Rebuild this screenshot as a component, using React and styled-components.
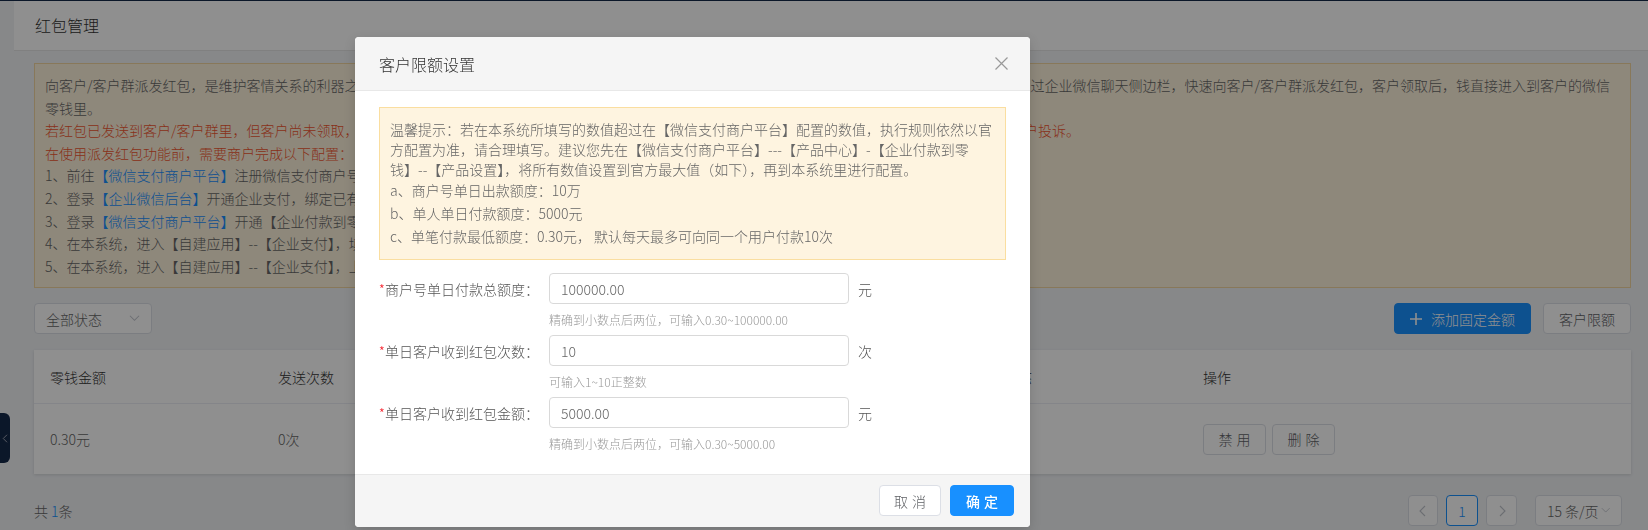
import React from 'react';
import styled, { createGlobalStyle } from 'styled-components';

const GlobalStyle = createGlobalStyle`
  html, body { margin: 0; padding: 0; }
  body {
    width: 1648px;
    height: 530px;
    overflow: hidden;
    background: #f0f2f5;
    font-family: "Noto Sans CJK SC", "Noto Sans", sans-serif;
    font-size: 14px;
    font-weight: 300;
    color: #666;
  }
  * { box-sizing: border-box; }
`;

const Page = styled.div`
  position: relative;
  width: 1648px;
  height: 530px;
`;

const TopLine = styled.div`
  height: 1px;
  background: #15294a;
`;

const Main = styled.div`
  margin-left: 14px;
`;

const PageHeader = styled.div`
  height: 50px;
  line-height: 49px;
  background: #fff;
  border-bottom: 1px solid #e4e4e4;
  padding-left: 21px;
  font-size: 16px;
  color: #333;
`;

const Content = styled.div`
  padding: 12px 17px 0 20px;
`;

const Notice = styled.div`
  border: 1px solid #f3d6a0;
  background: #fdf2dc;
  padding: 10px 12px 10px 10px;
  line-height: 22.6px;
  color: #666;
  white-space: nowrap;
`;

const Red = styled.div`
  color: #f2562f;
`;

const Link = styled.span`
  color: #1890ff;
`;

const Toolbar = styled.div`
  margin-top: 15px;
  height: 31px;
  display: flex;
  justify-content: space-between;
  align-items: center;
`;

const SelectBox = styled.div`
  width: ${(p) => p.w || 118}px;
  height: 31px;
  border: 1px solid #dcdfe6;
  border-radius: 4px;
  background: #fff;
  padding: 0 11px;
  display: flex;
  align-items: center;
  justify-content: space-between;
  white-space: nowrap;
  color: #666;
`;

const Actions = styled.div`
  display: flex;
  gap: 12px;
`;

const Button = styled.button`
  height: 31px;
  padding: 0 ${(p) => (p.w ? 0 : 15)}px;
  border-radius: 4px;
  font-family: inherit;
  font-size: 14px;
  white-space: nowrap;
  display: inline-flex;
  align-items: center;
  justify-content: center;
  gap: 9px;
  cursor: pointer;
  border: 1px solid ${(p) => (p.primary ? '#1890ff' : '#dcdfe6')};
  background: ${(p) => (p.primary ? '#1890ff' : '#fff')};
  color: ${(p) => (p.primary ? '#fff' : '#606266')};
  width: ${(p) => (p.w ? `${p.w}px` : 'auto')};
  letter-spacing: ${(p) => (p.spaced ? '0.3em' : 'normal')};
  text-indent: ${(p) => (p.spaced ? '0.3em' : '0')};
  font-weight: ${(p) => (p.bold ? 500 : 300)};
`;

const Table = styled.div`
  margin-top: 16px;
  background: #fff;
  box-shadow: 0 1px 3px rgba(0, 0, 0, 0.12);
`;

const Row = styled.div`
  display: grid;
  grid-template-columns: 228px 228px 228px 270px 199px 1fr;
  align-items: center;
  height: ${(p) => (p.head ? 54 : 70)}px;
  border-bottom: ${(p) => (p.head ? '1px solid #ebeef5' : 'none')};
  color: ${(p) => (p.head ? '#333' : '#666')};
`;

const Cell = styled.div`
  padding-left: 16px;
  display: flex;
  gap: 6px;
  white-space: nowrap;
`;

const Bottom = styled.div`
  margin-top: 21px;
  height: 31px;
  display: flex;
  align-items: center;
  justify-content: space-between;
  padding-right: 9px;
`;

const Total = styled.div`
  color: #666;
  span { color: #1890ff; }
`;

const Pager = styled.div`
  display: flex;
  align-items: center;
  gap: 8px;
`;

const PageBtn = styled.div`
  width: ${(p) => p.w || 31}px;
  height: 31px;
  border: 1px solid ${(p) => (p.active ? '#1890ff' : '#dcdfe6')};
  border-radius: 4px;
  background: #fff;
  color: ${(p) => (p.active ? '#1890ff' : '#c0c4cc')};
  display: flex;
  align-items: center;
  justify-content: center;
`;

const SizeSelect = styled(SelectBox)`
  margin-left: 10px;
  justify-content: flex-start;
  gap: 2px;
`;

const SideToggle = styled.div`
  position: absolute;
  left: 0;
  top: 413px;
  width: 10px;
  height: 50px;
  background: #15294a;
  border-radius: 0 6px 6px 0;
  display: flex;
  align-items: center;
  padding-left: 1px;
`;

const Mask = styled.div`
  position: fixed;
  inset: 0;
  background: rgba(0, 0, 0, 0.44);
`;

const Dialog = styled.div`
  position: absolute;
  left: 355px;
  top: 37px;
  width: 675px;
  background: #fff;
  border-radius: 4px;
  box-shadow: 0 4px 12px rgba(0, 0, 0, 0.15);
  overflow: hidden;
`;

const DialogHeader = styled.div`
  height: 54px;
  background: #f5f5f5;
  border-bottom: 1px solid #e8e8e8;
  padding: 0 22px 0 24px;
  display: flex;
  align-items: center;
  justify-content: space-between;
  font-size: 16px;
  color: #333;
`;

const DialogBody = styled.div`
  padding: 16px 24px 15px;
`;

const Tip = styled.div`
  border: 1px solid #fadea0;
  background: #fef4e0;
  padding: 11px 10px;
  color: #666;
  white-space: nowrap;
`;

const TipPara = styled.div`
  line-height: 20px;
`;

const TipLine = styled.div`
  line-height: 23px;
`;

const Form = styled.div`
  padding-top: 13px;
`;

const FormItem = styled.div`
  margin-bottom: 4px;
`;

const FormLine = styled.div`
  display: flex;
  align-items: center;
  height: 31px;
`;

const Label = styled.div`
  width: 170px;
  flex-shrink: 0;
  padding-right: 10px;
  display: flex;
  justify-content: flex-end;
  white-space: nowrap;
  color: #555;
  b {
    color: #f5222d;
    font-weight: 300;
  }
`;

const Input = styled.input`
  width: 300px;
  height: 31px;
  border: 1px solid #d9d9d9;
  border-radius: 4px;
  padding: 0 11px;
  font-family: inherit;
  font-size: 14px;
  font-weight: 300;
  color: #666;
  outline: none;
`;

const Unit = styled.span`
  margin-left: 9px;
  color: #555;
`;

const Help = styled.div`
  margin: 5px 0 0 170px;
  line-height: 22px;
  font-size: 12px;
  color: #999;
`;

const DialogFooter = styled.div`
  border-top: 1px solid #e8e8e8;
  background: #f5f5f5;
  padding: 10px 16px 11px;
  display: flex;
  justify-content: flex-end;
  gap: 9px;
`;

const Chevron = ({ dir = 'down', color = '#c0c4cc', size = 11 }) => {
  const pts = {
    down: '1,3 6,8 11,3',
    left: '8,1 3,6 8,11',
    right: '4,1 9,6 4,11',
  }[dir];
  return (
    <svg width={size} height={size} viewBox="0 0 12 12">
      <polyline points={pts} fill="none" stroke={color} strokeWidth="1.1" />
    </svg>
  );
};

const fields = [
  { label: '商户号单日付款总额度：', value: '100000.00', unit: '元', help: '精确到小数点后两位，可输入0.30~100000.00' },
  { label: '单日客户收到红包次数：', value: '10', unit: '次', help: '可输入1~10正整数' },
  { label: '单日客户收到红包金额：', value: '5000.00', unit: '元', help: '精确到小数点后两位，可输入0.30~5000.00' },
];

export default function App() {
  return (
    <Page>
      <GlobalStyle />
      <TopLine />
      <Main>
        <PageHeader>红包管理</PageHeader>
        <Content>
          <Notice>
            <div>
              向客户/客户群派发红包，是维护客情关系的利器之一。企业可在后台预先配置好固定的红包金额和每日发放限额，员工在与客户进行单聊沟通过程中，可随时通过企业微信聊天侧边栏，快速向客户/客户群派发红包，客户领取后，钱直接进入到客户的微信
              <br />
              零钱里。
            </div>
            <Red>若红包已发送到客户/客户群里，但客户尚未领取，红包将在第2个工作日自动退回到企业支付账户，请勿在短时间内重复发放红包，以免造成资金损失或引起客户投诉。</Red>
            <Red>在使用派发红包功能前，需要商户完成以下配置：</Red>
            <div>1、前往<Link>【微信支付商户平台】</Link>注册微信支付商户号，并完成企业实名认证；</div>
            <div>2、登录<Link>【企业微信后台】</Link>开通企业支付，绑定已有的微信支付商户号；</div>
            <div>3、登录<Link>【微信支付商户平台】</Link>开通【企业付款到零钱】功能，并设置相关额度；</div>
            <div>4、在本系统，进入【自建应用】--【企业支付】，填写企业ID及支付商户号；</div>
            <div>5、在本系统，进入【自建应用】--【企业支付】，上传支付证书并开启。</div>
          </Notice>

          <Toolbar>
            <SelectBox>
              全部状态
              <Chevron />
            </SelectBox>
            <Actions>
              <Button primary>
                <svg width="12" height="12" viewBox="0 0 12 12">
                  <path d="M6 0v12M0 6h12" stroke="#fff" strokeWidth="1.6" />
                </svg>
                添加固定金额
              </Button>
              <Button>客户限额</Button>
            </Actions>
          </Toolbar>

          <Table>
            <Row head>
              <Cell>零钱金额</Cell>
              <Cell>发送次数</Cell>
              <Cell>领取次数</Cell>
              <Cell>创建时间</Cell>
              <Cell>状态</Cell>
              <Cell>操作</Cell>
            </Row>
            <Row>
              <Cell>0.30元</Cell>
              <Cell>0次</Cell>
              <Cell>0次</Cell>
              <Cell>2021-06-01</Cell>
              <Cell>是</Cell>
              <Cell>
                <Button w={63} spaced>禁用</Button>
                <Button w={63} spaced>删除</Button>
              </Cell>
            </Row>
          </Table>

          <Bottom>
            <Total>
              共 <span>1</span>条
            </Total>
            <Pager>
              <PageBtn w={30}>
                <Chevron dir="left" size={12} />
              </PageBtn>
              <PageBtn w={32} active>1</PageBtn>
              <PageBtn>
                <Chevron dir="right" size={12} />
              </PageBtn>
              <SizeSelect w={87}>
                15 条/页
                <Chevron />
              </SizeSelect>
            </Pager>
          </Bottom>
        </Content>
      </Main>

      <SideToggle>
        <Chevron dir="left" color="#b8bec8" size={9} />
      </SideToggle>

      <Mask />

      <Dialog>
        <DialogHeader>
          客户限额设置
          <svg width="13" height="13" viewBox="0 0 13 13">
            <path d="M0.5 0.5l12 12M12.5 0.5l-12 12" stroke="#999" strokeWidth="1.2" />
          </svg>
        </DialogHeader>
        <DialogBody>
          <Tip>
            <TipPara>
              温馨提示：若在本系统所填写的数值超过在【微信支付商户平台】配置的数值，执行规则依然以官
              <br />
              方配置为准，请合理填写。建议您先在【微信支付商户平台】---【产品中心】-【企业付款到零
              <br />
              钱】--【产品设置】，将所有数值设置到官方最大值（如下），再到本系统里进行配置。
            </TipPara>
            <TipLine>a、商户号单日出款额度：10万</TipLine>
            <TipLine>b、单人单日付款额度：5000元</TipLine>
            <TipLine>c、单笔付款最低额度：0.30元， 默认每天最多可向同一个用户付款10次</TipLine>
          </Tip>
          <Form>
            {fields.map((f) => (
              <FormItem key={f.label}>
                <FormLine>
                  <Label>
                    <b>*</b>
                    {f.label}
                  </Label>
                  <Input readOnly value={f.value} />
                  <Unit>{f.unit}</Unit>
                </FormLine>
                <Help>{f.help}</Help>
              </FormItem>
            ))}
          </Form>
        </DialogBody>
        <DialogFooter>
          <Button w={62} spaced>取消</Button>
          <Button w={64} primary spaced bold>确定</Button>
        </DialogFooter>
      </Dialog>
    </Page>
  );
}
